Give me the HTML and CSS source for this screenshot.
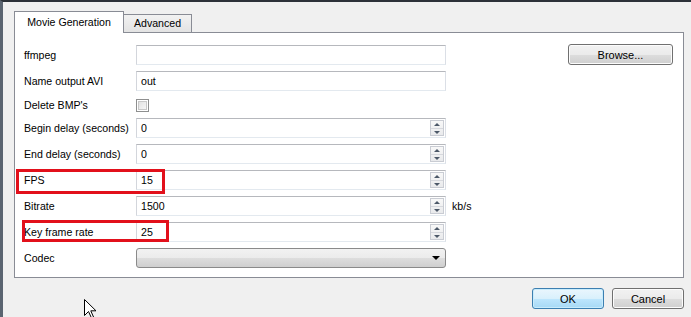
FILE: index.html
```html
<!DOCTYPE html>
<html lang="en">
<head>
    <meta charset="UTF-8">
    <title>Movie Generation</title>
    <link rel="stylesheet" href="styles.css">
</head>
<body>
    <div class="window">
        <div class="tabs">
            <div class="tab active">Movie Generation</div>
            <div class="tab">Advanced</div>
        </div>

        <div class="panel">
            <div class="row first">
                <label>ffmpeg</label>
                <div class="field"><span class="value"></span></div>
                <button class="btn browse">Browse...</button>
            </div>

            <div class="row">
                <label>Name output AVI</label>
                <div class="field"><span class="value">out</span></div>
            </div>

            <div class="row check-row">
                <label>Delete BMP's</label>
                <span class="checkbox"></span>
            </div>

            <div class="row">
                <label>Begin delay (seconds)</label>
                <div class="field"><span class="value">0</span><span class="spin"><i class="up"></i><i class="down"></i></span></div>
            </div>

            <div class="row">
                <label>End delay (seconds)</label>
                <div class="field"><span class="value">0</span><span class="spin"><i class="up"></i><i class="down"></i></span></div>
            </div>

            <!-- marked rows -->
            <div class="row mark mark-fps">
                <label>FPS</label>
                <div class="field"><span class="value">15</span><span class="spin"><i class="up"></i><i class="down"></i></span></div>
            </div>

            <div class="row">
                <label>Bitrate</label>
                <div class="field"><span class="value">1500</span><span class="spin"><i class="up"></i><i class="down"></i></span></div>
                <span class="unit">kb/s</span>
            </div>

            <div class="row mark mark-key">
                <label>Key frame rate</label>
                <div class="field"><span class="value">25</span><span class="spin"><i class="up"></i><i class="down"></i></span></div>
            </div>

            <div class="row">
                <label>Codec</label>
                <div class="combo"><span class="arrow"></span></div>
            </div>
        </div>

        <div class="footer">
            <button class="btn ok">OK</button>
            <button class="btn">Cancel</button>
        </div>

        <svg class="cursor" width="13" height="20" viewBox="0 0 13 20">
            <path d="M0.5 0.5 L0.5 16.5 L4.5 12.5 L7.5 19 L9.5 18 L6.8 11.8 L12 11.8 Z" fill="#fff" stroke="#000" stroke-width="1"/>
        </svg>
    </div>
</body>
</html>
```

FILE: styles.css
```css
body {
    margin: 0;
    background-color: #f0f0f0;
    font-family: "Liberation Sans", Arial, sans-serif;
    font-size: 10.6px;
    color: #000;
    overflow: hidden;
}

.window {
    position: relative;
    height: 305px;
    border-top: 2px solid #2c3138;
    border-left: 3px solid #5a6470;
    padding: 10px 7px 0 11px;
}

/* tabs */
.tabs {
    display: flex;
    align-items: flex-end;
    height: 20px;
}

.tab {
    width: 67px;
    height: 17px;
    line-height: 17px;
    text-align: center;
    border: 1px solid #898c95;
    border-bottom: none;
    background: linear-gradient(#f2f2f2, #e3e3e3);
    margin-left: -1px;
}

.tab.active {
    position: relative;
    z-index: 1;
    width: 108px;
    height: 21px;
    line-height: 20px;
    margin-left: 0;
    margin-bottom: -1px;
    background: #fff;
}

.panel {
    height: 233px;
    border: 1px solid #898c95;
    background: #fff;
    padding: 11px 10px 0 9px;
}

/* rows */
.row {
    position: relative;
    display: flex;
    align-items: center;
    height: 20px;
    margin-bottom: 6px;
}

.row.first {
    height: 21px;
}

.row.check-row {
    height: 16px;
    margin-bottom: 5px;
}

.row label {
    width: 112px;
    flex: none;
}

.field {
    display: flex;
    width: 308px;
    height: 18px;
    border: 1px solid;
    border-color: #b6b8bd #dbdfe6 #e3e9ef #d3d6dc;
    background: #fff;
}

.field .value {
    flex: 1;
    line-height: 18px;
    padding-left: 4px;
}

.spin {
    display: flex;
    flex-direction: column;
    width: 12px;
    margin: 1px 1px 1px 0;
    border: 1px solid #c9ccd3;
    background: linear-gradient(#f8f8f8, #e9eaec);
}

.spin i {
    flex: 1;
    position: relative;
}

.spin i.up {
    border-bottom: 1px solid #d6d8dd;
}

.spin i::after {
    content: "";
    position: absolute;
    left: 3px;
    top: 2px;
    border-left: 3px solid transparent;
    border-right: 3px solid transparent;
}

.spin i.up::after {
    border-bottom: 3px solid #4c5868;
}

.spin i.down::after {
    border-top: 3px solid #4c5868;
}

.unit {
    margin-left: 6px;
}

.checkbox {
    width: 11px;
    height: 11px;
    border: 1px solid #8e8f8f;
    box-shadow: inset 0 0 0 1px #fff, inset 0 0 0 2px #c8c8c8;
    background: linear-gradient(135deg, #dcdcdc, #fbfbfb);
}

.combo {
    position: relative;
    width: 308px;
    height: 18px;
    border: 1px solid #8a8a8a;
    border-radius: 3px;
    background: linear-gradient(#f2f2f2 0%, #ebebeb 50%, #dddddd 51%, #cfcfcf 100%);
}

.combo .arrow {
    position: absolute;
    right: 5px;
    top: 7px;
    border-left: 4px solid transparent;
    border-right: 4px solid transparent;
    border-top: 4px solid #000;
}

/* red markers */
.mark::after {
    content: "";
    position: absolute;
    border: 3px solid #e2101b;
}

.mark-fps::after {
    left: -8px;
    top: -1px;
    width: 143px;
    height: 19px;
}

.mark-key::after {
    left: -2px;
    top: -2px;
    width: 141px;
    height: 16px;
}

/* buttons */
.btn {
    font-family: inherit;
    font-size: 11px;
    color: #000;
    height: 21px;
    padding: 0;
    border: 1px solid #707070;
    border-radius: 3px;
    background: linear-gradient(#f2f2f2 0%, #ebebeb 50%, #dddddd 51%, #cfcfcf 100%);
    box-shadow: inset 0 0 0 1px #fcfcfc;
}

.browse {
    width: 105px;
    margin-left: auto;
}

.footer {
    display: flex;
    justify-content: flex-end;
    gap: 8px;
    margin-top: 10px;
}

.footer .btn {
    width: 72px;
}

.btn.ok {
    border-color: #3c7fb1;
    background: linear-gradient(#eaf6fd 0%, #d9f0fc 50%, #bee6fd 51%, #a7d9f5 100%);
    box-shadow: inset 0 0 0 1px #c9ecfc;
}

.cursor {
    position: absolute;
    left: 81px;
    top: 297px;
}
```
